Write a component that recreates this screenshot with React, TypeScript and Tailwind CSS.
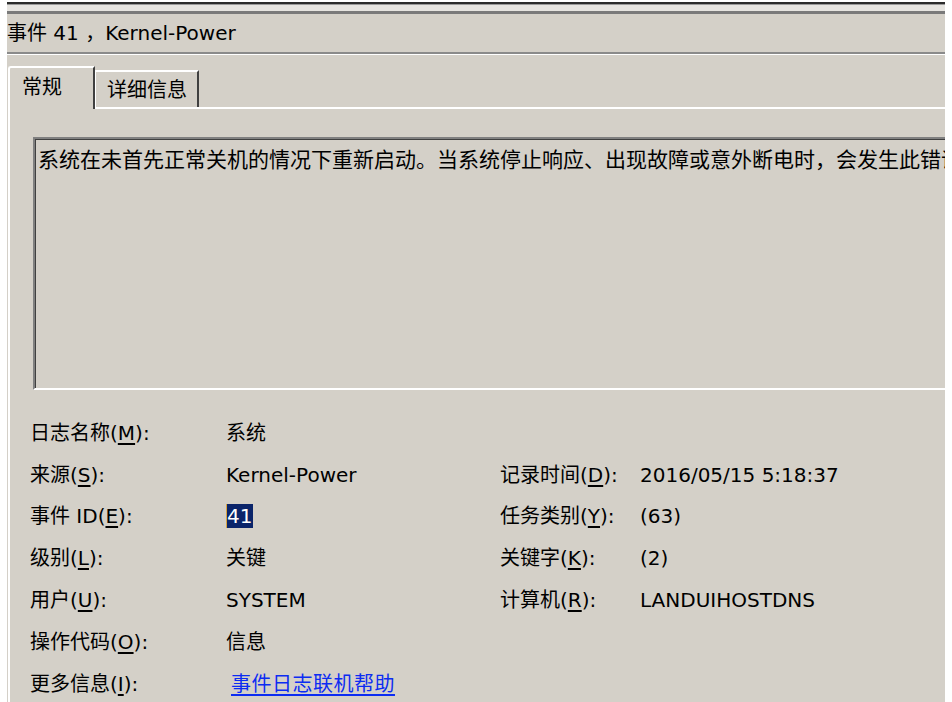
const font = "font-['DejaVu_Sans','Noto_Sans_CJK_SC',sans-serif]";

type Field = { label: string; key: string; rest?: string; value: React.ReactNode };

const Label = ({ label, k, rest = "" }: { label: string; k: string; rest?: string }) => (
  <span className="whitespace-nowrap">
    {label}(<u className="underline-offset-[3px]">{k}</u>){rest}:
  </span>
);

const rows: { left: Field; right?: Field }[] = [
  { left: { label: "日志名称", key: "M", value: "系统" } },
  {
    left: { label: "来源", key: "S", value: "Kernel-Power" },
    right: { label: "记录时间", key: "D", value: "2016/05/15 5:18:37" },
  },
  {
    left: {
      label: "事件 ID",
      key: "E",
      value: (
        <span className="border-l border-l-[#d9a441] bg-[#0a246a] pr-[1px] leading-[27px] text-white">41</span>
      ),
    },
    right: { label: "任务类别", key: "Y", value: "(63)" },
  },
  {
    left: { label: "级别", key: "L", value: "关键" },
    right: { label: "关键字", key: "K", value: "(2)" },
  },
  {
    left: { label: "用户", key: "U", value: "SYSTEM" },
    right: { label: "计算机", key: "R", value: "LANDUIHOSTDNS" },
  },
  { left: { label: "操作代码", key: "O", value: "信息" } },
  {
    left: {
      label: "更多信息",
      key: "I",
      value: (
        <span className="ml-[5px] text-[#0c2cf2] underline underline-offset-[3px] tracking-[0.5px]">事件日志联机帮助</span>
      ),
    },
  },
];

export default function App() {
  return (
    <div className="h-[702px] w-[952px] overflow-hidden bg-white px-[7px] pt-[2px]">
      <div className={`h-[700px] overflow-hidden bg-[#d4d0c8] text-[20px] text-black ${font}`}>
        {/* window frame lines */}
        <div className="h-[2px] bg-[#2b2b2b]" />
        <div className="h-px bg-[#9a9a9a]" />
        <div className="h-[6px] bg-[#e6e4e0]" />
        <div className="h-[3px] bg-[#7a7a7a]" />
        <div className="flex h-[38px] items-center whitespace-nowrap leading-none">事件 41 ，Kernel-Power</div>
        <div className="h-[2px] bg-[#8a8a8a]" />
        <div className="h-px bg-white" />

        {/* tabs */}
        <div className="ml-px flex h-[52px] items-end">
          <div className="relative z-10 -mb-[2px] h-[43px] w-[87px] rounded-tl-[3px] border-t-2 border-l-2 border-r-2 border-white border-r-[#404040] bg-[#d4d0c8] pl-[12px] pt-[8px] leading-[22px]">
            常规
          </div>
          <div className="h-[37px] w-[104px] border-t-2 border-l border-r-2 border-white border-r-[#404040] pl-[11px] pt-[7px] leading-[22px]">
            详细信息
          </div>
        </div>

        {/* panel */}
        <div className="ml-px h-[600px] border-t-2 border-l-2 border-white">
          <div className="ml-[23px] mt-[28px] w-[1000px] border-t-2 border-l-2 border-b-2 border-[#808080] border-b-white">
            <div className="h-[249px] border-t border-l border-[#404040] pl-[2px] pt-[9px]">
              <div className="whitespace-nowrap text-[21px] leading-[22px]">
                系统在未首先正常关机的情况下重新启动。当系统停止响应、出现故障或意外断电时，会发生此错误。
              </div>
            </div>
          </div>

          <div className="ml-[20px] mt-[22px]">
            {rows.map((r, i) => (
              <div key={i} className="grid h-[41.8px] grid-cols-[196px_274px_140px_1fr] items-center">
                <Label label={r.left.label} k={r.left.key} />
                <div className="whitespace-nowrap">{r.left.value}</div>
                {r.right ? (
                  <>
                    <Label label={r.right.label} k={r.right.key} />
                    <div className="whitespace-nowrap">{r.right.value}</div>
                  </>
                ) : null}
              </div>
            ))}
          </div>
        </div>
      </div>
    </div>
  );
}
